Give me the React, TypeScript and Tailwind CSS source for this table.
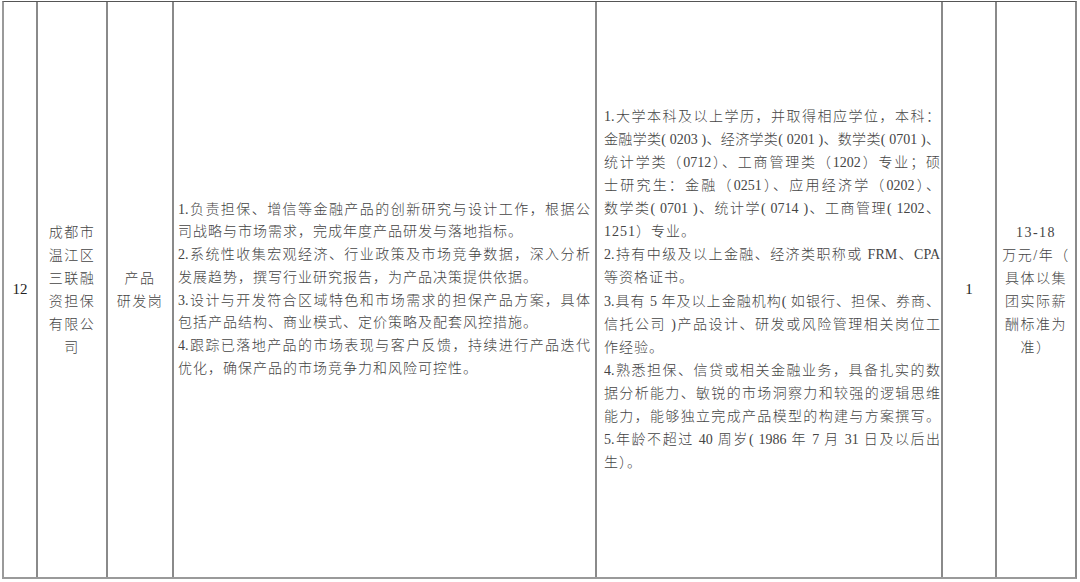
type Line = { text: string; full?: boolean };

const duties: Line[] = [
  { text: "1.负责担保、增信等金融产品的创新研究与设计工作，根据公", full: true },
  { text: "司战略与市场需求，完成年度产品研发与落地指标。" },
  { text: "2.系统性收集宏观经济、行业政策及市场竞争数据，深入分析", full: true },
  { text: "发展趋势，撰写行业研究报告，为产品决策提供依据。" },
  { text: "3.设计与开发符合区域特色和市场需求的担保产品方案，具体", full: true },
  { text: "包括产品结构、商业模式、定价策略及配套风控措施。" },
  { text: "4.跟踪已落地产品的市场表现与客户反馈，持续进行产品迭代", full: true },
  { text: "优化，确保产品的市场竞争力和风险可控性。" },
];

const requirements: Line[] = [
  { text: "1.大学本科及以上学历，并取得相应学位，本科：", full: true },
  { text: "金融学类( 0203 )、经济学类( 0201 )、数学类( 0701 )、", full: true },
  { text: "统计学类（0712）、工商管理类（1202）专业；硕", full: true },
  { text: "士研究生：金融（0251）、应用经济学（0202）、", full: true },
  { text: "数学类( 0701 )、统计学( 0714 )、工商管理( 1202、", full: true },
  { text: "1251）专业。" },
  { text: "2.持有中级及以上金融、经济类职称或 FRM、CPA", full: true },
  { text: "等资格证书。" },
  { text: "3.具有 5 年及以上金融机构( 如银行、担保、券商、", full: true },
  { text: "信托公司 )产品设计、研发或风险管理相关岗位工", full: true },
  { text: "作经验。" },
  { text: "4.熟悉担保、信贷或相关金融业务，具备扎实的数", full: true },
  { text: "据分析能力、敏锐的市场洞察力和较强的逻辑思维", full: true },
  { text: "能力，能够独立完成产品模型的构建与方案撰写。", full: true },
  { text: "5.年龄不超过 40 周岁( 1986 年 7 月 31 日及以后出", full: true },
  { text: "生）。" },
];

const company = ["成都市", "温江区", "三联融", "资担保", "有限公", "司"];
const position = ["产品", "研发岗"];
const salary = ["13-18", "万元/年（", "具体以集", "团实际薪", "酬标准为", "准）"];

function Paragraph({ lines, leading }: { lines: Line[]; leading: string }) {
  return (
    <div className={`w-full ${leading}`}>
      {lines.map((l, i) =>
        l.full ? (
          <div key={i} className="text-justify [text-align-last:justify] tracking-normal">
            {l.text}
          </div>
        ) : (
          <div key={i} className="text-left tracking-[1px]">
            {l.text}
          </div>
        )
      )}
    </div>
  );
}

function Stack({ lines }: { lines: string[] }) {
  return (
    <div className="w-full text-center leading-[23px] tracking-[1.5px]">
      {lines.map((l, i) => (
        <div key={i}>{l}</div>
      ))}
    </div>
  );
}

export default function App() {
  return (
    <div className="h-[582px] w-[1080px] bg-white">
      <div className="ml-[2px] mt-[1px] flex h-[578px] w-[1075px] border-t border-b-2 border-l-2 border-r-2 border-t-[#555] border-b-[#9a9a9a] border-l-[#9a9a9a] border-r-[#8a8a8a] font-['Liberation_Serif','Noto_Sans_CJK_SC',serif] text-[14px] font-light text-[#444]">
        <div className="flex w-[34px] shrink-0 items-center justify-center border-r-2 border-[#8a8a8a] text-[15px] font-normal text-[#222]">
          12
        </div>
        <div className="flex w-[70px] shrink-0 items-center border-r-2 border-[#8a8a8a] px-[2px]">
          <Stack lines={company} />
        </div>
        <div className="flex w-[66px] shrink-0 items-center border-r-2 border-[#8a8a8a] px-[2px]">
          <Stack lines={position} />
        </div>
        <div className="flex w-[423px] shrink-0 items-center border-r-2 border-[#8a8a8a] pl-[4px] pr-[5px]">
          <Paragraph lines={duties} leading="leading-[22.7px]" />
        </div>
        <div className="flex w-[346px] shrink-0 items-center border-r-2 border-[#8a8a8a] pl-[7px] pr-[1px]">
          <Paragraph lines={requirements} leading="leading-[23.1px]" />
        </div>
        <div className="flex w-[54px] shrink-0 items-center justify-center border-r-2 border-[#8a8a8a] text-[15px] font-normal text-[#222]">
          1
        </div>
        <div className="flex flex-1 items-center px-[2px]">
          <Stack lines={salary} />
        </div>
      </div>
    </div>
  );
}
